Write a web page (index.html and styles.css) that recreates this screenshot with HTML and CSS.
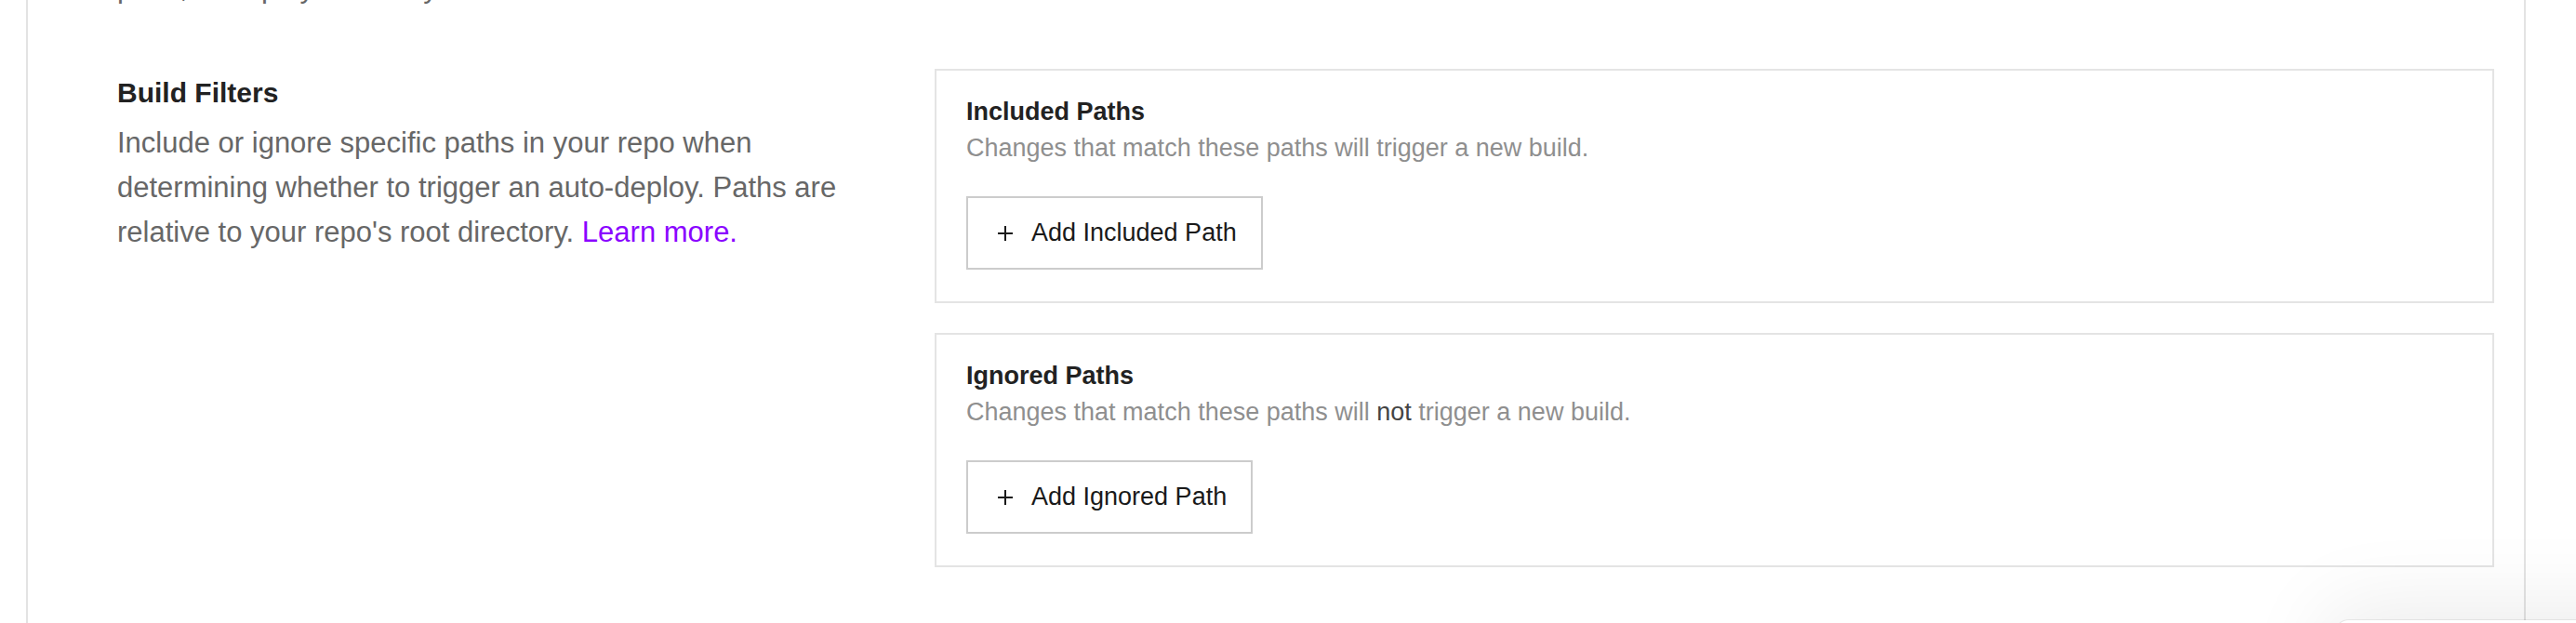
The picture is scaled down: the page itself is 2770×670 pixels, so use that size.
FILE: index.html
```html
<!DOCTYPE html>
<html lang="en">
<head>
<meta charset="utf-8">
<title>Build Filters</title>
<link rel="stylesheet" href="styles.css">
</head>
<body>
<main class="page">
  <section class="prev-setting">
    <p class="setting-desc">push, or deploy manually.</p>
  </section>
  <section class="setting">
    <div class="setting-info">
      <h3 class="setting-title">Build Filters</h3>
      <p class="setting-desc">Include or ignore specific paths in your repo when determining whether to trigger an auto-deploy. Paths are relative to your repo's root directory. <a class="link" href="#">Learn more.</a></p>
    </div>
    <div class="setting-body">
      <div class="filter-card">
        <h4 class="filter-title">Included Paths</h4>
        <p class="filter-sub">Changes that match these paths will trigger a new build.</p>
        <button class="add-btn" type="button"><span class="plus" aria-hidden="true"></span><span>Add Included Path</span></button>
      </div>
      <div class="filter-card">
        <h4 class="filter-title">Ignored Paths</h4>
        <p class="filter-sub">Changes that match these paths will <span class="em">not</span> trigger a new build.</p>
        <button class="add-btn" type="button"><span class="plus" aria-hidden="true"></span><span>Add Ignored Path</span></button>
      </div>
    </div>
  </section>
</main>
<div class="floating-panel"></div>
</body>
</html>
```
FILE: styles.css
```css
* { box-sizing: border-box; }
html, body { margin: 0; padding: 0; }
body {
  background: #ffffff;
  font-family: "Liberation Sans", Arial, sans-serif;
  color: #222222;
  height: 670px;
  overflow: hidden;
}
.page {
  display: flow-root;
  margin-left: 28px;
  width: 2688px;
  min-height: 670px;
  border-left: 2px solid #e3e3e3;
  border-right: 2px solid #e3e3e3;
  padding: 0 32px 0 96px;
}
.prev-setting {
  margin-top: -37px;
  width: 800px;
}
.setting-desc {
  margin: 0;
  font-size: 31px;
  line-height: 48px;
  color: #676767;
}
.setting {
  display: grid;
  grid-template-columns: 800px 1fr;
  column-gap: 79px;
  padding-top: 63px;
}
.setting-info { padding-top: 6px; }
.setting-title {
  margin: 0 0 10px;
  font-size: 30px;
  line-height: 40px;
  font-weight: 700;
  color: #222222;
}
.link { color: #8a05ff; text-decoration: none; }
.setting-body {
  display: flex;
  flex-direction: column;
  gap: 32px;
}
.filter-card {
  border: 2px solid #e4e4e4;
  padding: 26px 32px 34px;
  display: flex;
  flex-direction: column;
  align-items: flex-start;
}
.filter-title {
  margin: 0;
  font-size: 27px;
  line-height: 36px;
  font-weight: 700;
  color: #222222;
}
.filter-sub {
  margin: 0;
  font-size: 27px;
  line-height: 42px;
  color: #8f8f8f;
}
.filter-sub .em { color: #444444; }
.add-btn {
  margin-top: 31px;
  height: 79px;
  display: flex;
  align-items: center;
  gap: 20px;
  padding: 0 26px 0 32px;
  background: #ffffff;
  border: 2px solid #cccccc;
  border-radius: 0;
  font-family: inherit;
  font-size: 27px;
  color: #1a1a1a;
}
.plus {
  position: relative;
  width: 16px;
  height: 16px;
  flex: none;
}
.plus::before, .plus::after {
  content: "";
  position: absolute;
  background: #1a1a1a;
}
.plus::before { left: 0; right: 0; top: 7px; height: 2px; }
.plus::after { top: 0; bottom: 0; left: 7px; width: 2px; }
.floating-panel {
  position: fixed;
  left: 2510px;
  top: 667px;
  width: 420px;
  height: 200px;
  background: #ffffff;
  border-radius: 16px;
  box-shadow: 0 0 0 1px rgba(0,0,0,0.07), 0 -4px 90px 10px rgba(0,0,0,0.08);
}
```
